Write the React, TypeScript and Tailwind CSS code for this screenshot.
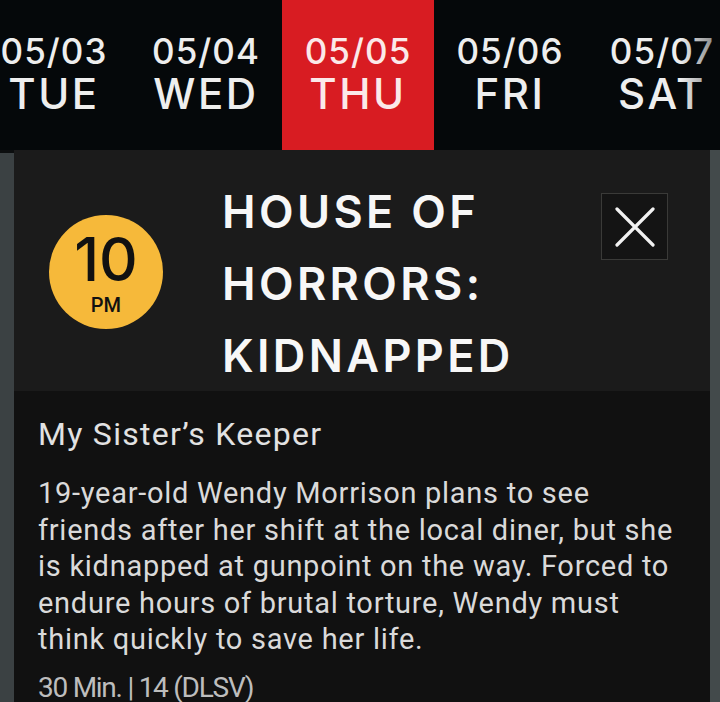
import React from 'react';

const days = [
  { date: '05/03', day: 'TUE' },
  { date: '05/04', day: 'WED' },
  { date: '05/05', day: 'THU', active: true },
  { date: '05/06', day: 'FRI' },
  { date: '05/07', day: 'SAT' },
];

const geo = { fontFamily: 'Inter, "DejaVu Sans", sans-serif' };
const roboto = { fontFamily: 'Roboto, "Liberation Sans", sans-serif' };

const DayTab: React.FC<{ date: string; day: string; active?: boolean }> = ({ date, day, active }) => (
  <div
    className={`w-[152px] shrink-0 h-full flex flex-col items-center pt-[31px] ${
      active ? 'bg-[#d81c22] text-[#fbe9e9]' : 'text-[#eeeeee]'
    }`}
    style={geo}
  >
    <span className="text-[35px] leading-[40px] font-medium tracking-[0.03em]">{date}</span>
    <span className="text-[42px] leading-[44px] font-medium tracking-[0.06em] mt-[1px]">{day}</span>
  </div>
);

const App: React.FC = () => {
  return (
    <div className="w-[720px] h-[702px] overflow-hidden bg-[#0c0e0f] flex flex-col">
      <div className="relative h-[150px] shrink-0 bg-[#05080a] flex overflow-hidden">
        <div className="flex h-full ml-[-22px]">
          {days.map((d) => (
            <DayTab key={d.date} {...d} />
          ))}
        </div>
        <div className="absolute right-0 top-0 h-full w-[40px] bg-gradient-to-r from-transparent to-[#05080a]/50" />
      </div>

      <div className="flex flex-1 min-h-0">
        <div className="w-[14px] shrink-0 mt-[3px] bg-[#3b4143]" />
        <div className="flex-1 flex flex-col">
          <div className="h-[241px] shrink-0 bg-[#1b1b1b] flex items-start pl-[35px] pr-[42px] pt-[26px]">
            <div className="w-[114px] h-[114px] shrink-0 mt-[39px] rounded-full bg-[#f6b93a] flex flex-col items-center text-[#111]">
              <span className="text-[60px] leading-[44px] mt-[22px] font-medium" style={geo}>
                10
              </span>
              <span className="text-[20px] leading-[18px] mt-[15px] font-medium" style={roboto}>
                PM
              </span>
            </div>
            <div
              className="flex-1 ml-[59px] text-[45px] leading-[72px] font-semibold tracking-[0.075em] text-[#f7f7f7]"
              style={geo}
            >
              HOUSE OF
              <br />
              HORRORS:
              <br />
              KIDNAPPED
            </div>
            <button className="w-[67px] h-[67px] shrink-0 mt-[17px] border border-[#3a3a38] bg-[#141414] flex items-center justify-center">
              <svg width="40" height="40" viewBox="0 0 40 40">
                <path d="M2 2 L38 38 M38 2 L2 38" stroke="#f2f2f2" strokeWidth="3.2" strokeLinecap="round" />
              </svg>
            </button>
          </div>

          <div className="flex-1 bg-[#111111] pl-[24px] pt-[25px]" style={roboto}>
            <div className="text-[32px] leading-[36px] tracking-[0.04em] text-[#e2e2e2]">My Sister’s Keeper</div>
            <p className="mt-[23px] text-[29px] leading-[36.5px] tracking-[0.025em] text-[#dadada] whitespace-nowrap">
              19-year-old Wendy Morrison plans to see
              <br />
              friends after her shift at the local diner, but she
              <br />
              is kidnapped at gunpoint on the way. Forced to
              <br />
              endure hours of brutal torture, Wendy must
              <br />
              think quickly to save her life.
            </p>
            <div className="mt-[12px] text-[28px] leading-[36px] text-[#bdbdbd] tracking-[-0.045em]">
              30 Min. | 14 (DLSV)
            </div>
          </div>
        </div>
        <div className="w-[10px] shrink-0 bg-[#434a4b]" />
      </div>
    </div>
  );
};

export default App;
